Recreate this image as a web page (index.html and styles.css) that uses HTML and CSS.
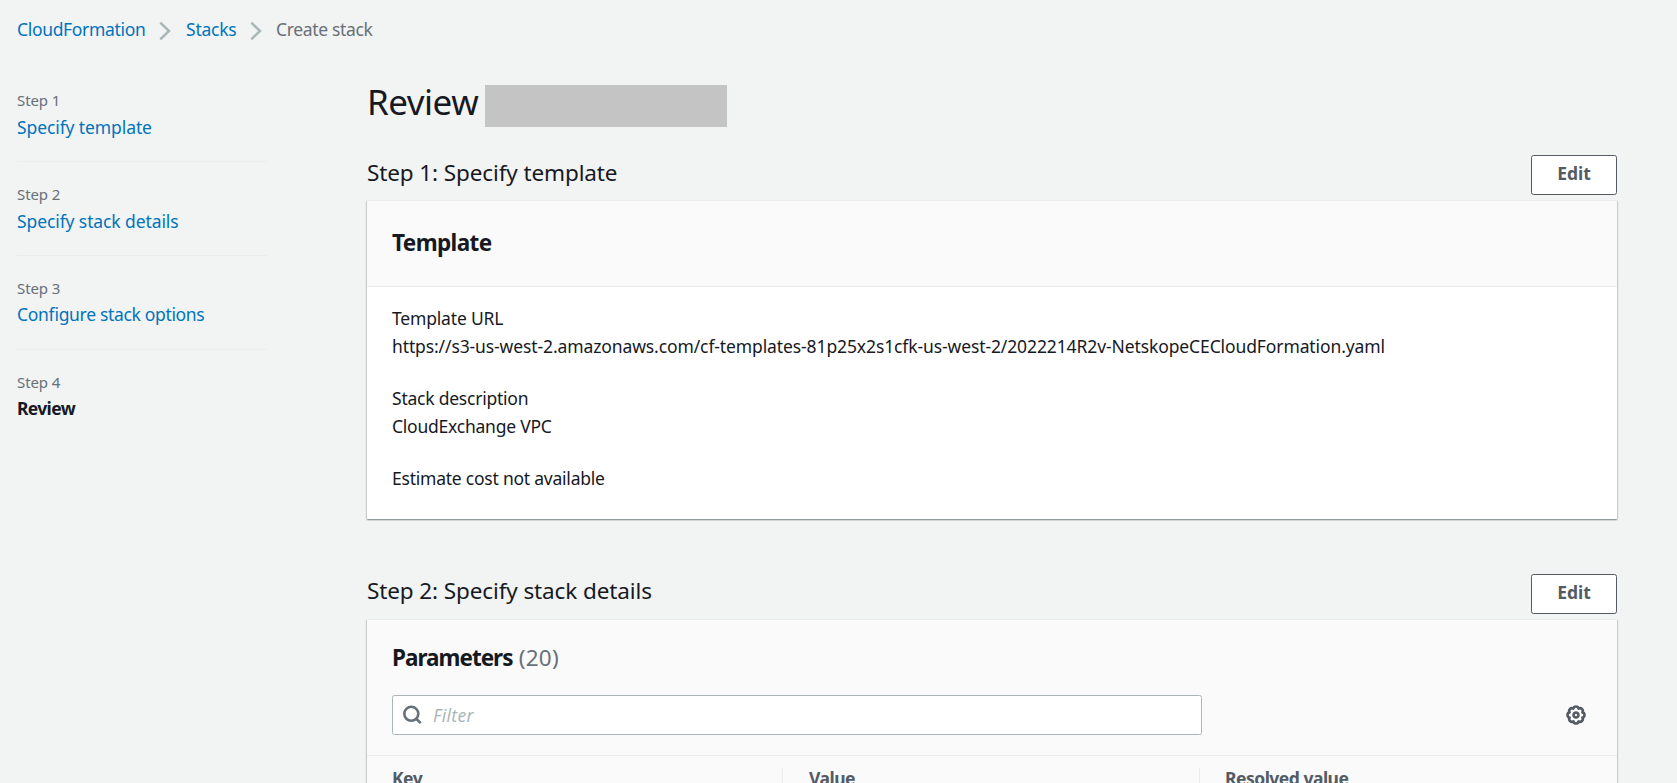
FILE: index.html
```
<!DOCTYPE html>
<html lang="en">
<head>
<meta charset="utf-8">
<title>CloudFormation - Create stack</title>
<link rel="stylesheet" href="styles.css">
</head>
<body>
<nav class="breadcrumbs">
  <a class="crumb-service">CloudFormation</a>
  <svg class="chevron" viewBox="0 0 12 20"><path d="M1.3 1.6 10 10l-8.7 8.4"/></svg>
  <a class="crumb-stacks">Stacks</a>
  <svg class="chevron" viewBox="0 0 12 20"><path d="M1.3 1.6 10 10l-8.7 8.4"/></svg>
  <span class="crumb-current">Create stack</span>
</nav>
<div class="layout">
  <ol class="steps">
    <li class="step"><span class="step-label">Step 1</span><a class="step-link">Specify template</a></li>
    <li class="step"><span class="step-label">Step 2</span><a class="step-link">Specify stack details</a></li>
    <li class="step tight"><span class="step-label">Step 3</span><a class="step-link step-options">Configure stack options</a></li>
    <li class="step tight"><span class="step-label">Step 4</span><strong class="step-current">Review</strong></li>
  </ol>
  <main class="content">
    <header class="title-row">
      <h1 class="title">Review</h1>
      <span class="redacted"></span>
    </header>

    <section class="section">
      <div class="section-head">
        <h2 class="section-title">Step 1: Specify template</h2>
        <button class="button">Edit</button>
      </div>
      <div class="panel">
        <div class="panel-head"><h3 class="panel-title template-title">Template</h3></div>
        <div class="panel-body">
          <div class="field">
            <div class="field-label">Template URL</div>
            <div class="url">https://s3-us-west-2.amazonaws.com/cf-templates-81p25x2s1cfk-us-west-2/2022214R2v-NetskopeCECloudFormation.yaml</div>
          </div>
          <div class="field">
            <div>Stack description</div>
            <div>CloudExchange VPC</div>
          </div>
          <div class="field">Estimate cost not available</div>
        </div>
      </div>
    </section>

    <section class="section">
      <div class="section-head">
        <h2 class="section-title">Step 2: Specify stack details</h2>
        <button class="button">Edit</button>
      </div>
      <div class="panel">
        <div class="table-head">
          <h3 class="panel-title parameters-title">Parameters <span class="count">(20)</span></h3>
          <div class="toolbar">
            <div class="search">
              <svg class="search-icon" viewBox="0 0 20 20"><circle cx="9.3" cy="8.8" r="7"/><path d="m14.2 13.7 4.5 4.4"/></svg>
              <span class="placeholder">Filter</span>
            </div>
            <svg class="gear" viewBox="-10 -10 20 20">
              <path d="M6.37-2.64A2.7 2.7 0 0 1 6.37 2.64A2.7 2.7 0 0 1 2.64 6.37A2.7 2.7 0 0 1-2.64 6.37A2.7 2.7 0 0 1-6.37 2.64A2.7 2.7 0 0 1-6.37-2.64A2.7 2.7 0 0 1-2.64-6.37A2.7 2.7 0 0 1 2.64-6.37A2.7 2.7 0 0 1 6.37-2.64Z"/>
              <circle r="2.5"/>
            </svg>
          </div>
        </div>
        <div class="columns">
          <div class="column">Key</div>
          <div class="column column-value">Value</div>
          <div class="column">Resolved value</div>
        </div>
      </div>
    </section>
  </main>
</div>
</body>
</html>
```
FILE: styles.css
```
* {
  box-sizing: border-box;
}

body {
  margin: 0;
  height: 783px;
  overflow: hidden;
  background: #f2f3f3;
  color: #16191f;
  font: 17.5px/28px "Noto Sans", "Open Sans", sans-serif;
  letter-spacing: -0.23px;
  font-feature-settings: "liga" 1;
}

h1, h2, h3, ol {
  margin: 0;
  padding: 0;
  font-weight: 400;
}

a {
  color: #0073bb;
}

svg {
  flex: none;
  fill: none;
}

.breadcrumbs {
  display: flex;
  align-items: center;
  height: 58px;
  padding: 0 17px;
}

.crumb-service {
  width: 142px;
  letter-spacing: -0.33px;
}

.crumb-stacks {
  width: 64px;
  margin-left: 15px;
}

.crumb-current {
  margin-left: 14px;
  color: #687078;
  letter-spacing: -0.35px;
}

.chevron {
  width: 12px;
  height: 20px;
  margin-top: 4px;
  stroke: #aab7b8;
  stroke-width: 2.5;
}

.layout {
  display: grid;
  grid-template-columns: 250px 1250px;
  column-gap: 100px;
  padding-left: 17px;
}

.steps {
  padding-top: 10px;
  list-style: none;
}

.step {
  display: flex;
  flex-direction: column;
  gap: 3px;
  height: 94px;
  padding-top: 22px;
  border-bottom: 1px solid #eaeded;
}

.step:last-child {
  border-bottom: 0;
}

.tight {
  gap: 2px;
}

.step-label {
  color: #687078;
  font-size: 15px;
  line-height: 20px;
  letter-spacing: -0.1px;
}

.step-link {
  letter-spacing: -0.1px;
}

.step-options {
  letter-spacing: -0.33px;
}

.step-current {
  letter-spacing: -0.65px;
}

.content {
  padding-top: 20px;
}

.title-row {
  display: flex;
  gap: 7px;
  height: 77px;
}

.title {
  width: 111px;
  padding-top: 2px;
  font-size: 35px;
  line-height: 44px;
  letter-spacing: -0.5px;
}

.redacted {
  width: 242px;
  height: 42px;
  margin-top: 7px;
  background: #c4c4c4;
}

.section {
  margin-bottom: 55px;
}

.section-head {
  display: flex;
  justify-content: space-between;
  height: 45px;
}

.section-title {
  padding-top: 4px;
  font-size: 22.5px;
  letter-spacing: -0.11px;
}

.section + .section .section-title {
  padding-top: 3px;
}

.button {
  width: 86px;
  height: 40px;
  padding: 0 0 4px;
  border: 1px solid #545b64;
  border-radius: 2.5px;
  background: #fff;
  color: #545b64;
  font: 700 17.5px/34px "Noto Sans", sans-serif;
}

.panel {
  border-top: 1px solid #eaeded;
  background: #fff;
  box-shadow: 0 1.25px 1.25px 0 rgba(0, 28, 36, 0.3), 1.25px 1.25px 1.25px 0 rgba(0, 28, 36, 0.15), -1.25px 1.25px 1.25px 0 rgba(0, 28, 36, 0.15);
}

.panel-head {
  padding: 28px 25px 29px;
  border-bottom: 1px solid #eaeded;
  background: #fafafa;
}

.panel-title {
  font-size: 22.5px;
  font-weight: 700;
}

.template-title {
  letter-spacing: -0.6px;
}

.parameters-title {
  letter-spacing: -1px;
}

.count {
  margin-left: 1.5px;
  color: #687078;
  font-weight: 400;
  letter-spacing: 0.2px;
}

.panel-body {
  display: flex;
  flex-direction: column;
  gap: 24px;
  padding: 17px 25px 27px;
}

.field-label {
  letter-spacing: -0.18px;
}

.url {
  white-space: nowrap;
  letter-spacing: -0.11px;
}

.table-head {
  padding: 24px 25px 20px;
  border-bottom: 1px solid #eaeded;
  background: #fafafa;
}

.toolbar {
  display: flex;
  align-items: center;
  justify-content: space-between;
  margin-top: 23px;
  padding-right: 6px;
}

.search {
  display: flex;
  align-items: center;
  gap: 11px;
  width: 810px;
  height: 40px;
  padding-left: 9px;
  border: 1px solid #aab7b8;
  border-radius: 2.5px;
  background: #fff;
}

.search-icon {
  width: 20px;
  height: 20px;
  stroke: #687078;
  stroke-width: 2.6;
}

.placeholder {
  margin-top: -1px;
  color: #aab7b8;
  font-style: italic;
  letter-spacing: 0.3px;
}

.gear {
  width: 20px;
  height: 20px;
  stroke: #545b64;
  stroke-width: 2.6;
  stroke-linejoin: round;
}

.columns {
  display: grid;
  grid-template-columns: 416px 417px 1fr;
  padding: 8px 0;
  background: #fafafa;
}

.column {
  padding-left: 25px;
  color: #545b64;
  font-weight: 700;
  letter-spacing: -0.5px;
  background: linear-gradient(#eaeded, #eaeded) right 4px / 1px 100% no-repeat;
}

.column-value {
  padding-left: 26px;
}

.column:last-child {
  background: none;
}
```
